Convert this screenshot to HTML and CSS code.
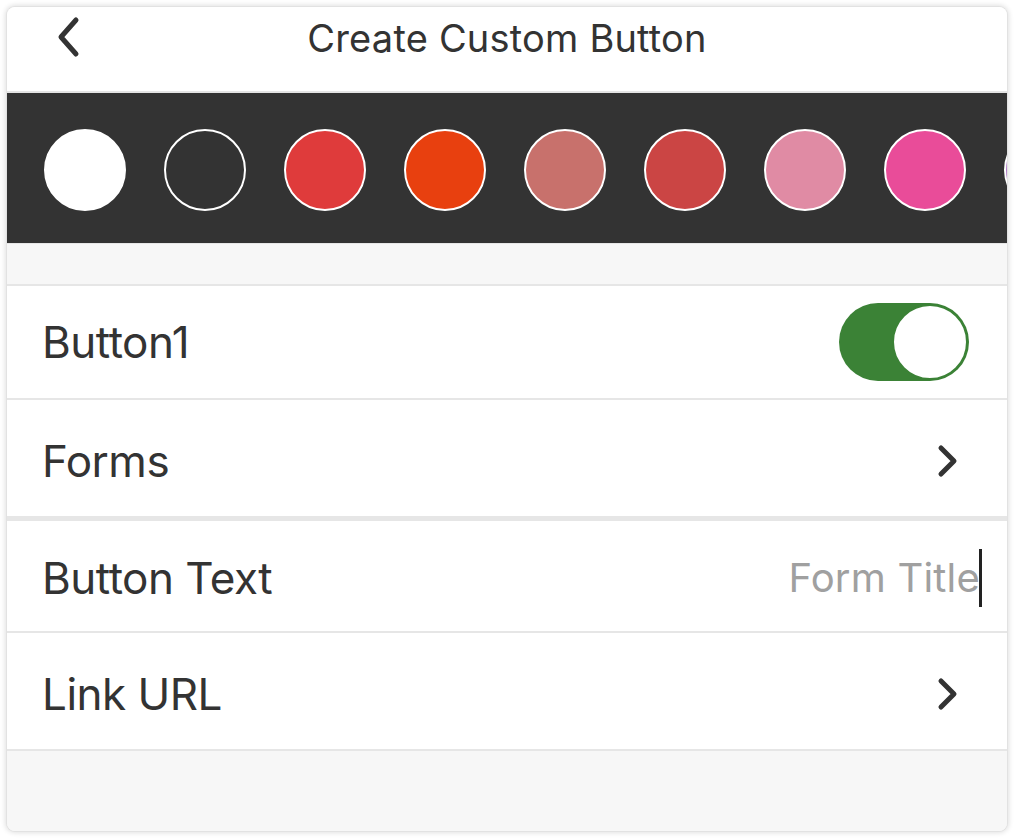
FILE: index.html
```html
<!DOCTYPE html>
<html>
<head>
<meta charset="utf-8">
<link rel="stylesheet" href="styles.css">
</head>
<body>
<div class="card">
  <header class="header">
    <svg class="back" viewBox="0 0 28 42" width="28" height="42"><path d="M22 4 L7 21 L22 38" fill="none" stroke="#333" stroke-width="5" stroke-linecap="round" stroke-linejoin="round"/></svg>
    <h1 class="title">Create Custom Button</h1>
  </header>
  <div class="palette">
    <span class="dot dot-white"></span>
    <span class="dot dot-dark"></span>
    <span class="dot" style="background:#df3b3b"></span>
    <span class="dot" style="background:#e8400f"></span>
    <span class="dot" style="background:#c8716c"></span>
    <span class="dot" style="background:#cb4544"></span>
    <span class="dot" style="background:#e08ba4"></span>
    <span class="dot" style="background:#e94c99"></span>
    <span class="dot" style="background:#b07cc6"></span>
  </div>
  <div class="gap gap-top"></div>
  <div class="row row-a">
    <span class="label">Button1</span>
    <span class="toggle"><span class="knob"></span></span>
  </div>
  <div class="row row-b sep-thick">
    <span class="label">Forms</span>
    <svg class="chev" viewBox="0 0 26 36" width="26" height="36"><path d="M7 5 L20 18 L7 31" fill="none" stroke="#333" stroke-width="5" stroke-linecap="round" stroke-linejoin="round"/></svg>
  </div>
  <div class="row row-a">
    <span class="label">Button Text</span>
    <span class="input"><span class="placeholder">Form Title</span><span class="caret"></span></span>
  </div>
  <div class="row row-b">
    <span class="label">Link URL</span>
    <svg class="chev" viewBox="0 0 26 36" width="26" height="36"><path d="M7 5 L20 18 L7 31" fill="none" stroke="#333" stroke-width="5" stroke-linecap="round" stroke-linejoin="round"/></svg>
  </div>
  <div class="gap gap-bottom"></div>
</div>
</body>
</html>
```
FILE: styles.css
```css
* { box-sizing: border-box; }
html, body { margin: 0; padding: 0; background: #fff; }
body {
  font-family: Inter, "Open Sans", "Liberation Sans", sans-serif;
  color: #333;
  padding: 7px 8px 8px 7px;
}
.card {
  width: 1000px;
  height: 824px;
  background: #f7f7f7;
  border-radius: 8px;
  overflow: hidden;
  box-shadow: 0 0 0 1px #e2e2e2, 0 0 5px 2px rgba(0,0,0,0.12);
  display: flex;
  flex-direction: column;
}
.header {
  height: 86px;
  flex: none;
  background: #fff;
  border-bottom: 2px solid #e4e4e4;
  display: flex;
  align-items: flex-start;
  position: relative;
}
.back {
  position: absolute;
  left: 47px;
  top: 9px;
}
.title {
  margin: 0;
  width: 100%;
  text-align: center;
  font-size: 38px;
  font-weight: 400;
  line-height: 1;
  padding-top: 12px;
  letter-spacing: 0.2px;
}
.palette {
  height: 150px;
  flex: none;
  background: #333;
  display: flex;
  align-items: center;
  gap: 38px;
  padding-left: 37px;
  padding-top: 4px;
  overflow: hidden;
}
.dot {
  flex: none;
  width: 82px;
  height: 82px;
  border-radius: 50%;
  border: 2px solid #fff;
}
.dot-white { background: #fff; }
.dot-dark { background: #333; }
.gap { background: #f7f7f7; flex: none; }
.gap-top {
  height: 43px;
  border-top: 1px solid #e6e6e6;
  border-bottom: 2px solid #e6e6e6;
}
.gap-bottom { flex: 1; border-top: 2px solid #e6e6e6; }
.row {
  background: #fff;
  flex: none;
  display: flex;
  align-items: center;
  justify-content: space-between;
  padding: 0 38px 0 35px;
  border-top: 2px solid #e6e6e6;
}
.gap-top + .row { border-top: none; }
.row-a { height: 112px; }
.row-b { height: 118px; padding-top: 5px; }
.sep-thick + .row { border-top: 5px solid #e6e6e6; height: 115px; padding-top: 3px; }
.label {
  font-size: 44px;
  font-weight: 400;
  color: #333;
  letter-spacing: -0.5px;
}
.toggle {
  width: 130px;
  height: 78px;
  border-radius: 39px;
  background: #3b8236;
  display: flex;
  justify-content: flex-end;
  align-items: center;
  padding: 1px;
}
.knob {
  width: 76px;
  height: 76px;
  border-radius: 50%;
  background: #fff;
  border: 2px solid #3b8236;
}
.chev { margin-right: 9px; }
.input {
  display: flex;
  align-items: center;
  margin-right: -13px;
}
.placeholder {
  font-size: 40px;
  color: #a0a0a0;
  letter-spacing: 0.2px;
}
.caret {
  width: 3px;
  height: 58px;
  background: #222;
  margin-left: -1px;
}
```
